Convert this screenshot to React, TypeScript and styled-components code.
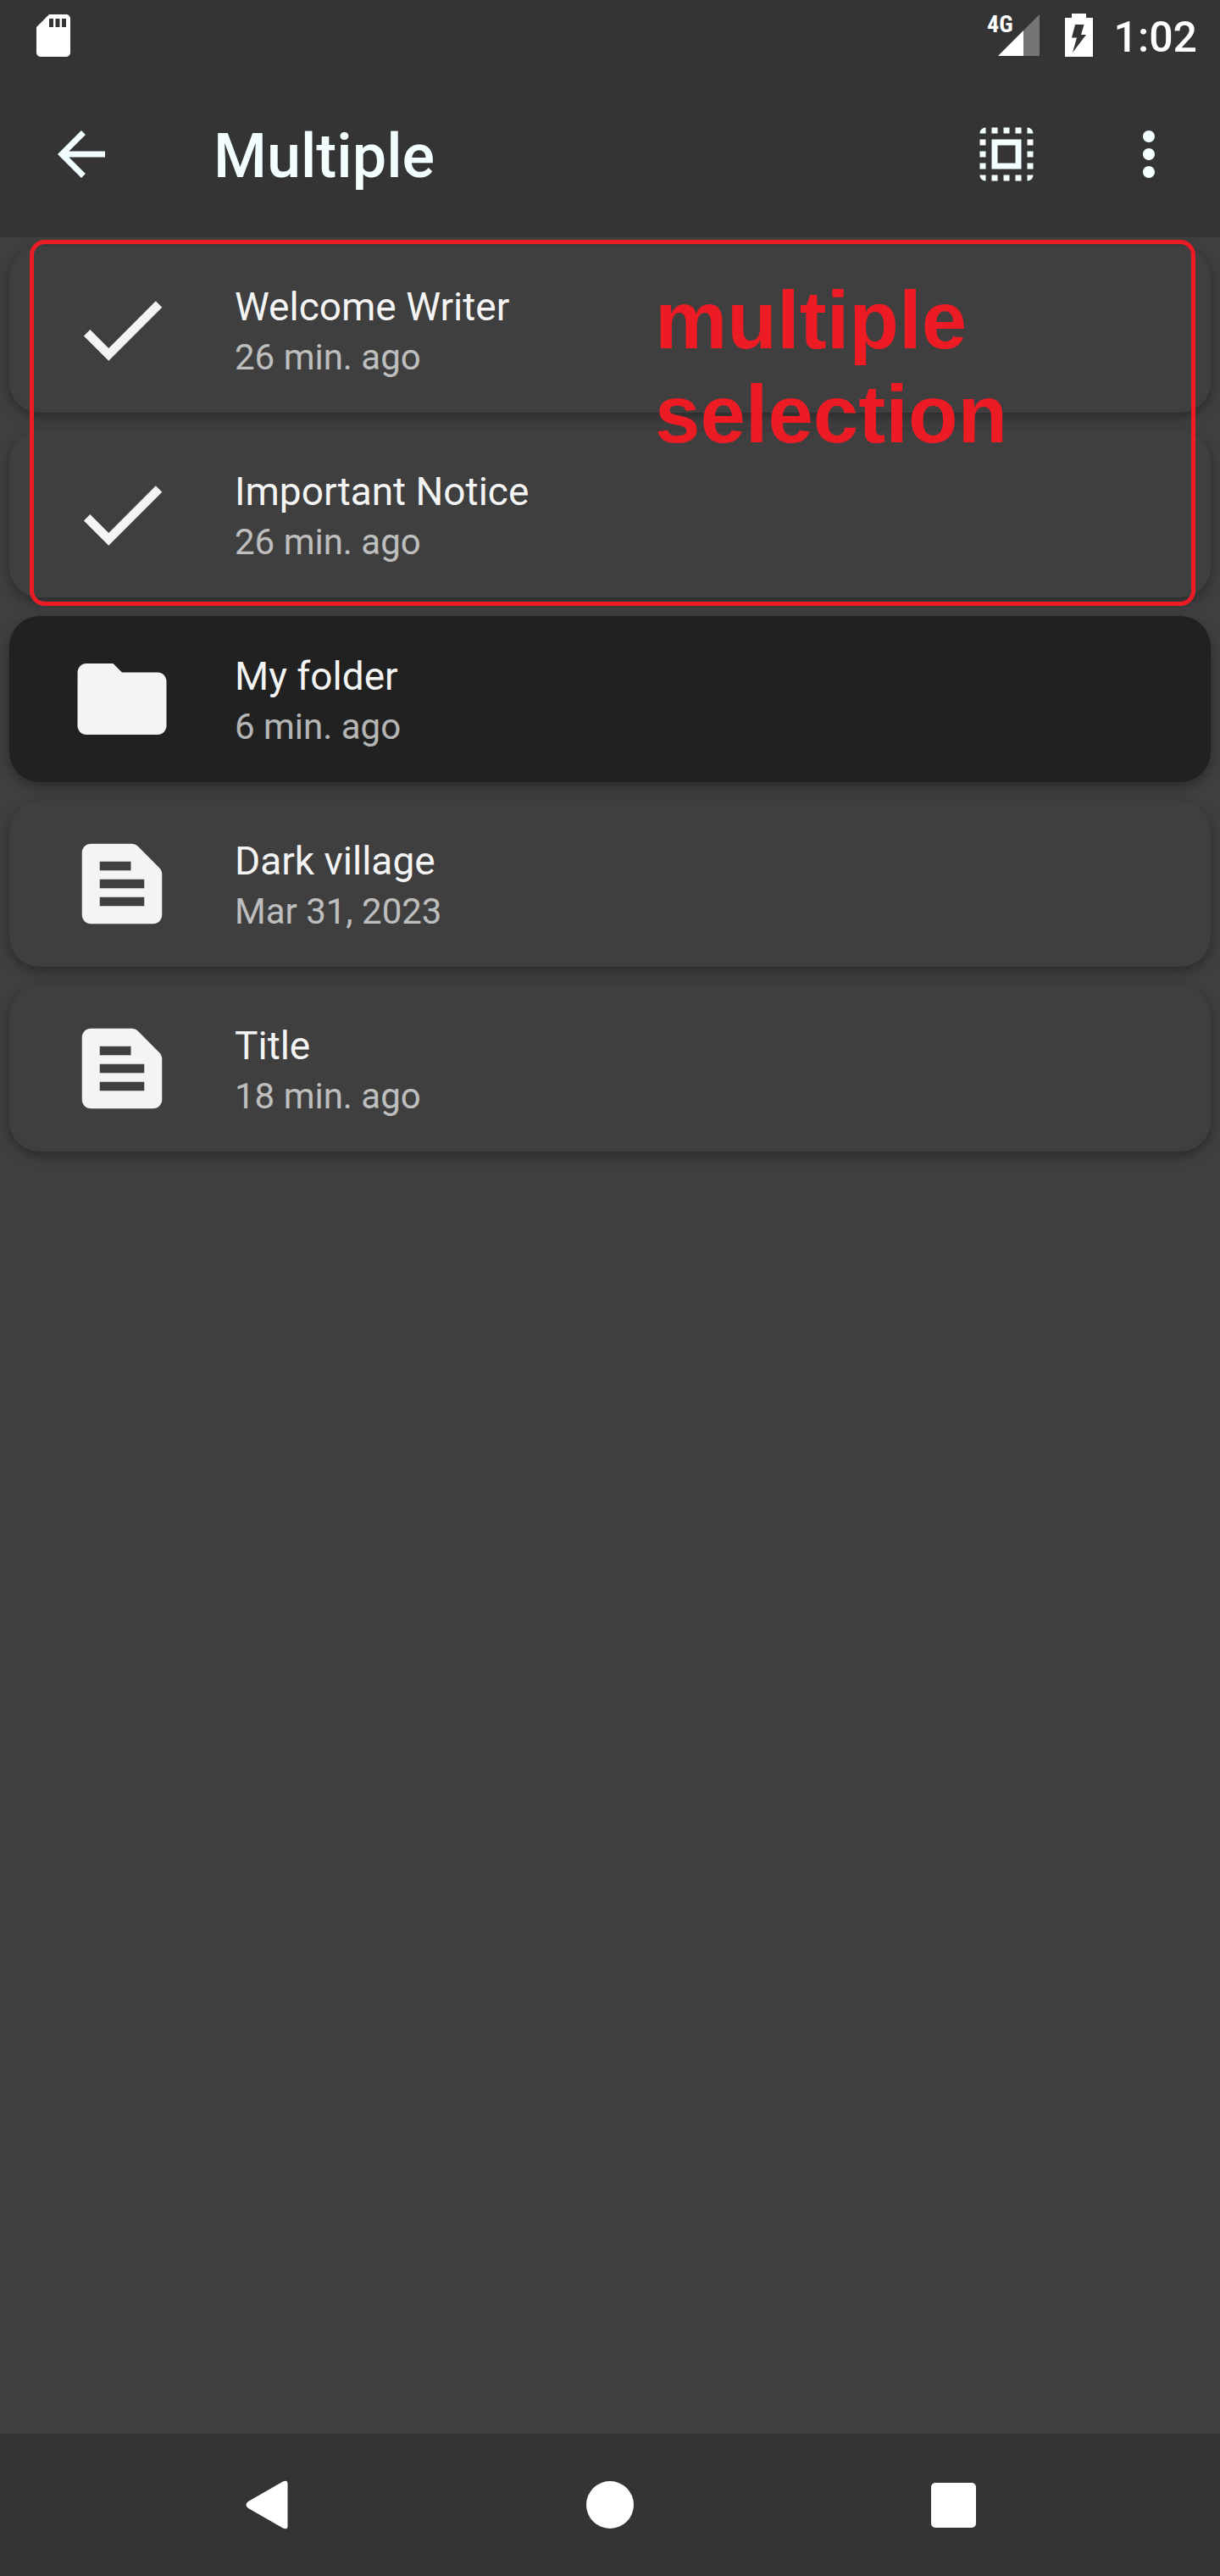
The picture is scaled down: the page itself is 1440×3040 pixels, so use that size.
import React, { useState } from "react";
import styled, { createGlobalStyle } from "styled-components";

const GlobalStyle = createGlobalStyle`
  *, *::before, *::after { box-sizing: border-box; }
  body {
    margin: 0;
    background: #3f3f3f;
    font-family: Roboto, "Noto Sans", sans-serif;
  }
  button { font: inherit; color: inherit; }
`;

const Screen = styled.div`
  display: flex;
  flex-direction: column;
  min-height: 100vh;
  background: #3f3f3f;
`;

const StatusBar = styled.div`
  display: flex;
  align-items: center;
  justify-content: space-between;
  height: 84px;
  padding: 0 27px 1px 33px;
  background: #343434;
  color: #ffffff;
`;

const StatusGroup = styled.div`
  display: flex;
  align-items: center;
`;

const Network = styled.div`
  display: flex;
  align-items: flex-start;
  margin-right: 30px;
`;

const NetworkLabel = styled.span`
  margin-right: -18px;
  font-family: "Roboto Condensed", "Liberation Sans Narrow", Roboto, sans-serif;
  font-size: 28px;
  font-weight: 700;
  line-height: 24px;
`;

const Clock = styled.time`
  padding-top: 4px;
  margin-left: 25px;
  font-size: 50px;
  font-weight: 500;
  line-height: 60px;
`;

const AppBar = styled.header`
  display: flex;
  align-items: center;
  height: 196px;
  padding: 0 42px 0 54px;
  background: #343434;
  color: #f2fffe;
`;

const IconButton = styled.button`
  display: flex;
  flex: none;
  padding: 0;
  border: 0;
  background: none;
`;

const Heading = styled.h1`
  flex: 1;
  margin: 0;
  padding: 6px 0 0 114px;
  font-size: 72px;
  font-weight: 500;
  line-height: 84px;
`;

const Actions = styled.div`
  display: flex;
  gap: 84px;
`;

const Main = styled.main`
  position: relative;
  flex: 1;
  padding: 11px;
`;

const List = styled.ul`
  display: flex;
  flex-direction: column;
  gap: 22px;
  margin: 0;
  padding: 0;
  list-style: none;
`;

const Card = styled.button<{ $dark: boolean }>`
  display: flex;
  align-items: center;
  gap: 70px;
  width: 100%;
  height: 196px;
  padding: 0 70px;
  border: 0;
  border-radius: 36px;
  background: ${(p) => (p.$dark ? "#212121" : "#3f3f3f")};
  box-shadow: 0 5px 14px rgba(0, 0, 0, 0.32);
  color: #f4f4f4;
  text-align: left;
`;

const CardText = styled.span`
  display: flex;
  flex-direction: column;
  padding-top: 6px;
`;

const CardTitle = styled.span`
  font-size: 46px;
  line-height: 60px;
`;

const CardDate = styled.span`
  color: #f4f4f4;
  font-size: 42px;
  line-height: 60px;
  opacity: 0.7;
`;

const Highlight = styled.div`
  position: absolute;
  top: 3px;
  left: 35px;
  right: 29px;
  height: 432px;
  border: 5px solid #ed1c24;
  border-radius: 18px;
  pointer-events: none;
`;

const Note = styled.p`
  margin: 0;
  padding: 34px 0 0 733px;
  color: #ed1c24;
  font-family: "Liberation Sans", Arial, sans-serif;
  font-size: 96px;
  font-weight: 700;
  line-height: 111px;
`;

const NavBar = styled.nav`
  display: grid;
  grid-template-columns: repeat(3, 1fr);
  height: 168px;
  padding: 0 112px;
  background: #343434;
`;

const NavButton = styled.button`
  display: flex;
  align-items: center;
  justify-content: center;
  padding: 0;
  border: 0;
  background: none;
`;

const icons = {
  sd: "M18 2h-8L4 8v12c0 1.1.9 2 2 2h12c1.1 0 2-.9 2-2V4c0-1.1-.9-2-2-2zM12 8h-2V4h2v4zm3 0h-2V4h2v4zm3 0h-2V4h2v4z",
  back: "M20 11H7.83l5.59-5.59L12 4l-8 8 8 8 1.41-1.41L7.83 13H20v-2z",
  selectAll:
    "M3 5h2V3c-1.1 0-2 .9-2 2zm0 8h2v-2H3v2zm4 8h2v-2H7v2zM3 9h2V7H3v2zm10-6h-2v2h2V3zm6 0v2h2c0-1.1-.9-2-2-2zM5 21v-2H3c0 1.1.9 2 2 2zm-2-4h2v-2H3v2zM9 3H7v2h2V3zm2 18h2v-2h-2v2zm8-8h2v-2h-2v2zm0 8c1.1 0 2-.9 2-2h-2v2zm0-12h2V7h-2v2zm0 8h2v-2h-2v2zm-4 4h2v-2h-2v2zm0-16h2V3h-2v2zM7 17h10V7H7v10zm2-8h6v6H9V9z",
  more: "M12 8c1.1 0 2-.9 2-2s-.9-2-2-2-2 .9-2 2 .9 2 2 2zm0 2c-1.1 0-2 .9-2 2s.9 2 2 2 2-.9 2-2-.9-2-2-2zm0 6c-1.1 0-2 .9-2 2s.9 2 2 2 2-.9 2-2-.9-2-2-2z",
  check: "M9 16.17L4.83 12l-1.42 1.41L9 19 21 7l-1.41-1.41z",
  folder: "M10 4H4c-1.1 0-1.99.9-1.99 2L2 18c0 1.1.9 2 2 2h16c1.1 0 2-.9 2-2V8c0-1.1-.9-2-2-2h-8l-2-2z",
  note: "M20.41 8.41l-4.83-4.83C15.21 3.21 14.7 3 14.17 3H5c-1.1 0-2 .9-2 2v14c0 1.1.9 2 2 2h14c1.1 0 2-.9 2-2V9.83c0-.53-.21-1.04-.59-1.42zM7 7h7v2H7V7zm10 10H7v-2h10v2zm0-4H7v-2h10v2z",
};

type IconName = keyof typeof icons;

function Icon({ name, size }: { name: IconName; size: number }) {
  return (
    <svg width={size} height={size} viewBox="0 0 24 24" fill="currentColor" aria-hidden="true">
      <path d={icons[name]} />
    </svg>
  );
}

function SignalIcon() {
  return (
    <svg width="49" height="49" viewBox="0 0 49 49" aria-hidden="true">
      <path d="M30 19L49 0v49H30z" fill="#757575" />
      <path d="M0 49L30 19v30z" fill="#fff" />
    </svg>
  );
}

function BatteryIcon() {
  return (
    <svg width="33" height="51" viewBox="0 0 33 51" aria-hidden="true">
      <path d="M8 0h17v5h8v46H0V5h8z" fill="#fff" />
      <path d="M12 13h10.500L19 25h6L9 46l5-17.500H8z" fill="#343434" />
    </svg>
  );
}

interface Entry {
  title: string;
  date: string;
  kind: "note" | "folder";
}

const entries: Entry[] = [
  { title: "Welcome Writer", date: "26 min. ago", kind: "note" },
  { title: "Important Notice", date: "26 min. ago", kind: "note" },
  { title: "My folder", date: "6 min. ago", kind: "folder" },
  { title: "Dark village", date: "Mar 31, 2023", kind: "note" },
  { title: "Title", date: "18 min. ago", kind: "note" },
];

export default function App() {
  const [selected, setSelected] = useState<number[]>([0, 1]);

  const toggle = (index: number) =>
    setSelected((current) =>
      current.includes(index) ? current.filter((i) => i !== index) : [...current, index]
    );

  return (
    <>
      <GlobalStyle />
      <Screen>
        <StatusBar>
          <Icon name="sd" size={60} />
          <StatusGroup>
            <Network>
              <NetworkLabel>4G</NetworkLabel>
              <SignalIcon />
            </Network>
            <BatteryIcon />
            <Clock>1:02</Clock>
          </StatusGroup>
        </StatusBar>

        <AppBar>
          <IconButton type="button" aria-label="Back">
            <Icon name="back" size={84} />
          </IconButton>
          <Heading>Multiple</Heading>
          <Actions>
            <IconButton
              type="button"
              aria-label="Select all"
              onClick={() => setSelected(entries.map((_, i) => i))}
            >
              <Icon name="selectAll" size={84} />
            </IconButton>
            <IconButton type="button" aria-label="More options">
              <Icon name="more" size={84} />
            </IconButton>
          </Actions>
        </AppBar>

        <Main>
          <List>
            {entries.map((entry, index) => {
              const isSelected = selected.includes(index);
              return (
                <li key={entry.title}>
                  <Card
                    type="button"
                    $dark={entry.kind === "folder"}
                    aria-pressed={isSelected}
                    onClick={() => toggle(index)}
                  >
                    <Icon name={isSelected ? "check" : entry.kind} size={126} />
                    <CardText>
                      <CardTitle>{entry.title}</CardTitle>
                      <CardDate>{entry.date}</CardDate>
                    </CardText>
                  </Card>
                </li>
              );
            })}
          </List>
          <Highlight>
            <Note>
              multiple
              <br />
              selection
            </Note>
          </Highlight>
        </Main>

        <NavBar aria-label="System navigation">
          <NavButton type="button" aria-label="Back">
            <svg width="50" height="58" viewBox="0 0 50 58" aria-hidden="true">
              <path d="M3 25L44 1.500Q49.500-1 49.500 4v50q0 5-5.500 2.500L3 33Q-2 29 3 25z" fill="#fff" />
            </svg>
          </NavButton>
          <NavButton type="button" aria-label="Home">
            <svg width="56" height="56" viewBox="0 0 56 56" aria-hidden="true">
              <circle cx="28" cy="28" r="28" fill="#fff" />
            </svg>
          </NavButton>
          <NavButton type="button" aria-label="Recent apps">
            <svg width="53" height="53" viewBox="0 0 53 53" aria-hidden="true">
              <rect width="53" height="53" rx="5" fill="#fff" />
            </svg>
          </NavButton>
        </NavBar>
      </Screen>
    </>
  );
}
